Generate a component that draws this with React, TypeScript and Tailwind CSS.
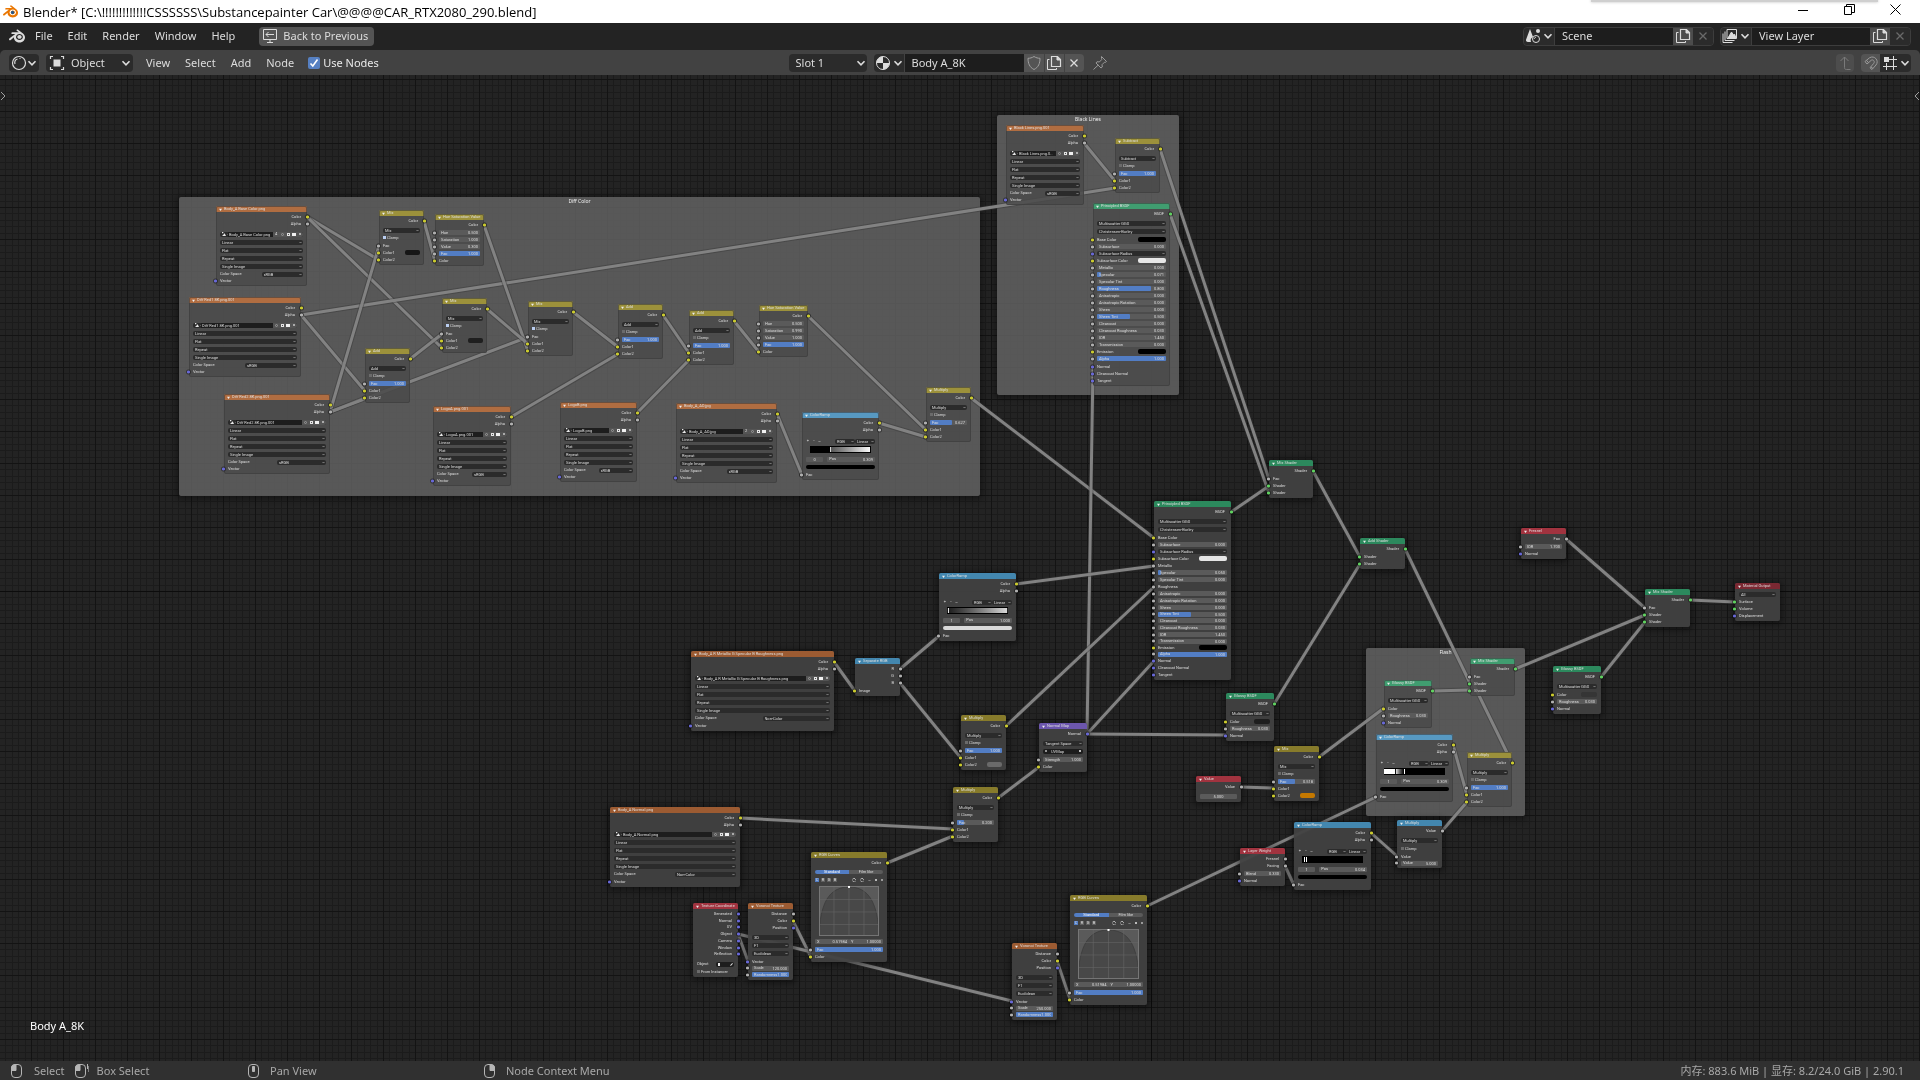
import React from "react";
import { SiBlender } from "react-icons/si";

type Sock = "y" | "g" | "b" | "s";
type Row = {
  k: string;
  t?: string;
  v?: string;
  c?: Sock;
  f?: number;
  short?: boolean;
  on?: boolean;
  sw?: string;
  stops?: number[];
  grad?: string;
  n?: number;
};
type NodeData = {
  x: number;
  y: number;
  w: number;
  title: string;
  kind: keyof typeof HEAD;
  rows: Row[];
  framed?: boolean;
};

const CANVAS_TOP = 75;

const SOCK: Record<Sock, string> = {
  y: "bg-[#cccc2c]",
  g: "bg-[#b0b0b0]",
  b: "bg-[#6868d8]",
  s: "bg-[#5fd35f]",
};

const HEAD = {
  tex: ["bg-[#9c5b32]", "bg-[#b06d41]"],
  color: ["bg-[#877b2b]", "bg-[#9c913b]"],
  conv: ["bg-[#4387af]", "bg-[#5799c2]"],
  shader: ["bg-[#2c895d]", "bg-[#409d70]"],
  input: ["bg-[#a1333f]", "bg-[#b34753]"],
  vector: ["bg-[#6c56ad]", "bg-[#6c56ad]"],
  output: ["bg-[#7b2832]", "bg-[#7b2832]"],
};

const GAP: Record<number, string> = { 1: "h-px", 2: "h-0.5", 3: "h-[3px]", 4: "h-1" };

/* ---------- row builders ---------- */
const gap = (n: number): Row => ({ k: "gap", n });
const out = (t: string, c: Sock, short = false): Row => ({ k: "out", t, c, short });
const inp = (t: string, c: Sock, short = false): Row => ({ k: "in", t, c, short });
const dd = (t: string): Row => ({ k: "dd", t });
const check = (on = false, t = "Clamp"): Row => ({ k: "check", t, on });
const num = (t: string, v: string, f = 0, c: Sock | undefined = "g", short = false): Row => ({ k: "num", t, v, f, c, short });
const col = (t: string, sw: string, c: Sock = "y"): Row => ({ k: "col", t, sw, c });

const image = (name: string, space: string, n?: number): Row[] => [
  out("Color", "y"),
  out("Alpha", "g"),
  gap(space === "sRGB" ? 3 : 2),
  { k: "img", t: name, n },
  dd("Linear"),
  dd("Flat"),
  dd("Repeat"),
  dd("Single Image"),
  { k: "space", t: "Color Space", v: space },
  inp("Vector", "b", space === "sRGB"),
];
const mix = (mode: string, on: boolean, fac: Row, c2: Row = inp("Color2", "y"), c1: Row = inp("Color1", "y")): Row[] => [
  out("Color", "y"), gap(2), dd(mode), check(on), gap(1), fac, c1, c2,
];
const hsv = (h: string, s: string, v: string): Row[] => [
  out("Color", "y"), gap(1), num("Hue", h), num("Saturation", s), num("Value", v), num("Fac", "1.000", 100), inp("Color", "y"),
];
const ramp = (grad: string, stops: number[], idx: string, pos: string, sw: string): Row[] => [
  out("Color", "y"),
  out("Alpha", "g"),
  gap(4),
  { k: "rampbar" },
  { k: "ramp", grad, stops },
  gap(2),
  { k: "ramppos", t: idx, v: pos },
  { k: "swatch", sw },
  inp("Fac", "g"),
];
const mixShader: Row[] = [out("Shader", "s"), gap(1), inp("Fac", "g"), inp("Shader", "s"), inp("Shader", "s")];
const glossy = (sw: string): Row[] => [
  out("BSDF", "s"), gap(2), dd("Multiscatter GGX"), gap(1), col("Color", sw), num("Roughness", "0.030"), inp("Normal", "b"),
];
const principled = (linked: boolean): Row[] => [
  out("BSDF", "s"),
  gap(2),
  dd("Multiscatter GGX"),
  dd("Christensen-Burley"),
  gap(1),
  linked ? inp("Base Color", "y") : col("Base Color", "bg-black"),
  num("Subsurface", "0.000"),
  { k: "dds", t: "Subsurface Radius", c: "b" },
  col("Subsurface Color", "bg-[#e6e6e6]"),
  linked ? inp("Metallic", "g") : num("Metallic", "0.000"),
  num("Specular", linked ? "0.050" : "0.071", linked ? 4 : 6),
  num("Specular Tint", "0.000"),
  linked ? inp("Roughness", "g") : num("Roughness", "0.800", 78),
  num("Anisotropic", "0.000"),
  num("Anisotropic Rotation", "0.000"),
  num("Sheen", "0.000"),
  num("Sheen Tint", "0.500", 48, "g", linked),
  num("Clearcoat", "0.000"),
  num("Clearcoat Roughness", "0.030"),
  num("IOR", "1.450"),
  num("Transmission", "0.000", 0, "g", linked),
  col("Emission", "bg-black"),
  num("Alpha", "1.000", 100, "g", linked),
  gap(1),
  inp("Normal", "b", linked),
  inp("Clearcoat Normal", "b"),
  inp("Tangent", "b"),
];
const voronoi = (scale: string): Row[] => [
  out("Distance", "g"), out("Color", "y"), out("Position", "b"), gap(2), dd("3D"), dd("F1"), dd("Euclidean"), gap(1),
  inp("Vector", "b"), num("Scale", scale, 0, "g", true), num("Randomness", "1.000", 100),
];
const curves: Row[] = [
  out("Color", "y"), gap(2), { k: "tabs" }, { k: "curvebar" }, gap(2), { k: "curve" }, gap(2), { k: "xy" }, gap(1),
  num("Fac", "1.000", 100), inp("Color", "y"),
];

/* ---------- graph ---------- */
const nodes: NodeData[] = [
  { x: 216, y: 206, w: 91, title: "Body_A Base Color.png", kind: "tex", framed: true, rows: image("Body_A Base Color.png", "sRGB", 4) },
  { x: 189, y: 297, w: 112, title: "Diff Red1 8K.png.001", kind: "tex", framed: true, rows: image("Diff Red1 8K.png.001", "sRGB") },
  { x: 224, y: 394, w: 106, title: "Diff Red2 8K.png.001", kind: "tex", framed: true, rows: image("Diff Red2 8K.png.001", "sRGB") },
  { x: 379, y: 210, w: 45, title: "Mix", kind: "color", framed: true, rows: mix("Mix", true, inp("Fac", "g"), inp("Color2", "y"), col("Color1", "bg-[#161616]")) },
  { x: 435, y: 214, w: 49, title: "Hue Saturation Value", kind: "color", framed: true, rows: hsv("0.500", "1.000", "0.300") },
  { x: 442, y: 298, w: 45, title: "Mix", kind: "color", framed: true, rows: mix("Mix", true, inp("Fac", "g"), inp("Color2", "y"), col("Color1", "bg-[#1f1f1f]")) },
  { x: 365, y: 348, w: 45, title: "Add", kind: "color", framed: true, rows: mix("Add", false, num("Fac", "1.000", 100)) },
  { x: 528, y: 301, w: 45, title: "Mix", kind: "color", framed: true, rows: mix("Mix", true, inp("Fac", "g")) },
  { x: 433, y: 406, w: 78, title: "LogoA.png.001", kind: "tex", framed: true, rows: image("LogoA.png.001", "sRGB") },
  { x: 560, y: 402, w: 77, title: "LogoB.png", kind: "tex", framed: true, rows: image("LogoB.png", "sRGB") },
  { x: 618, y: 304, w: 45, title: "Add", kind: "color", framed: true, rows: mix("Add", false, num("Fac", "1.000", 100)) },
  { x: 689, y: 310, w: 45, title: "Add", kind: "color", framed: true, rows: mix("Add", false, num("Fac", "1.000", 100)) },
  { x: 759, y: 305, w: 49, title: "Hue Saturation Value", kind: "color", framed: true, rows: hsv("0.500", "0.990", "1.000") },
  { x: 676, y: 403, w: 101, title: "Body_A_AO.jpg", kind: "tex", framed: true, rows: image("Body_A_AO.jpg", "sRGB", 2) },
  { x: 802, y: 412, w: 77, title: "ColorRamp", kind: "conv", framed: true, rows: ramp("bg-linear-to-r from-black from-33% via-[#555] via-34% to-white", [33, 99], "0", "0.309", "bg-black") },
  { x: 926, y: 387, w: 45, title: "Multiply", kind: "color", framed: true, rows: mix("Multiply", false, num("Fac", "0.627", 60)) },
  { x: 1006, y: 125, w: 78, title: "Black Lines.png.001", kind: "tex", framed: true, rows: image("Black Lines.png.0..", "sRGB") },
  { x: 1115, y: 138, w: 45, title: "Subtract", kind: "color", framed: true, rows: mix("Subtract", false, num("Fac", "1.000", 100)) },
  { x: 1093, y: 203, w: 77, title: "Principled BSDF", kind: "shader", framed: true, rows: principled(false) },
  { x: 1269, y: 460, w: 44, title: "Mix Shader", kind: "shader", rows: mixShader },
  { x: 1154, y: 501, w: 77, title: "Principled BSDF", kind: "shader", rows: principled(true) },
  { x: 1360, y: 538, w: 45, title: "Add Shader", kind: "shader", rows: [out("Shader", "s"), gap(1), inp("Shader", "s"), inp("Shader", "s")] },
  { x: 1226, y: 693, w: 48, title: "Glossy BSDF", kind: "shader", rows: glossy("bg-[#1e1e1e]") },
  { x: 939, y: 573, w: 77, title: "ColorRamp", kind: "conv", rows: ramp("bg-linear-to-r from-[#1a1a1a] to-[#dcdcdc]", [1, 99], "1", "1.000", "bg-[#d9d9d9]") },
  { x: 691, y: 651, w: 143, title: "Body_A R Metallic G Specular B Roughness.png", kind: "tex", rows: image("Body_A R Metallic G Specular B Roughness.png", "Non-Color") },
  { x: 855, y: 658, w: 45, title: "Separate RGB", kind: "conv", rows: [out("R", "g"), out("G", "g"), out("B", "g"), gap(1), inp("Image", "y")] },
  { x: 961, y: 715, w: 45, title: "Multiply", kind: "color", rows: mix("Multiply", false, num("Fac", "1.000", 100), col("Color2", "bg-[#6a6a6a]")) },
  { x: 1039, y: 723, w: 48, title: "Normal Map", kind: "vector", rows: [out("Normal", "b"), gap(2), dd("Tangent Space"), { k: "uv", t: "UVMap" }, gap(1), num("Strength", "1.000"), inp("Color", "y")] },
  { x: 953, y: 787, w: 45, title: "Multiply", kind: "color", rows: mix("Multiply", false, num("Fac", "0.200", 18)) },
  { x: 610, y: 807, w: 130, title: "Body_A Normal.png", kind: "tex", rows: image("Body_A Normal.png", "Non-Color") },
  { x: 693, y: 903, w: 45, title: "Texture Coordinate", kind: "input", rows: [out("Generated", "b"), out("Normal", "b"), out("UV", "b", true), out("Object", "b"), out("Camera", "b"), out("Window", "b"), out("Reflection", "b", true), gap(3), { k: "object", t: "Object" }, check(false, "From Instancer")] },
  { x: 748, y: 903, w: 45, title: "Voronoi Texture", kind: "tex", rows: voronoi("120.000") },
  { x: 811, y: 852, w: 76, title: "RGB Curves", kind: "color", rows: curves },
  { x: 1012, y: 943, w: 45, title: "Voronoi Texture", kind: "tex", rows: voronoi("250.000") },
  { x: 1070, y: 895, w: 77, title: "RGB Curves", kind: "color", rows: curves },
  { x: 1470, y: 658, w: 45, title: "Mix Shader", kind: "shader", framed: true, rows: mixShader },
  { x: 1384, y: 680, w: 48, title: "Glossy BSDF", kind: "shader", framed: true, rows: [out("BSDF", "s"), gap(2), dd("Multiscatter GGX"), gap(1), inp("Color", "y"), num("Roughness", "0.030"), inp("Normal", "b")] },
  { x: 1376, y: 734, w: 77, title: "ColorRamp", kind: "conv", framed: true, rows: ramp("bg-linear-to-r from-white from-18% to-black to-34%", [18, 32], "1", "0.309", "bg-black") },
  { x: 1467, y: 752, w: 45, title: "Multiply", kind: "color", framed: true, rows: mix("Multiply", false, num("Fac", "1.000", 100)) },
  { x: 1274, y: 746, w: 45, title: "Mix", kind: "color", rows: mix("Mix", false, num("Fac", "0.518", 47), col("Color2", "bg-[#c47800]")) },
  { x: 1196, y: 776, w: 45, title: "Value", kind: "input", rows: [out("Value", "g"), gap(2), { k: "value", v: "5.000" }] },
  { x: 1240, y: 848, w: 45, title: "Layer Weight", kind: "input", rows: [out("Fresnel", "g"), out("Facing", "g"), gap(1), num("Blend", "0.330"), inp("Normal", "b")] },
  { x: 1294, y: 822, w: 77, title: "ColorRamp", kind: "conv", rows: ramp("bg-black", [3, 6], "1", "0.034", "bg-black") },
  { x: 1397, y: 820, w: 45, title: "Multiply", kind: "conv", rows: [out("Value", "g"), gap(2), dd("Multiply"), gap(1), check(), gap(1), inp("Value", "g"), num("Value", "5.000", 0, "g", true)] },
  { x: 1553, y: 666, w: 48, title: "Glossy BSDF", kind: "shader", rows: glossy("bg-[#353535]") },
  { x: 1521, y: 528, w: 45, title: "Fresnel", kind: "input", rows: [out("Fac", "g"), gap(1), num("IOR", "1.700"), inp("Normal", "b")] },
  { x: 1645, y: 589, w: 45, title: "Mix Shader", kind: "shader", rows: mixShader },
  { x: 1735, y: 583, w: 45, title: "Material Output", kind: "output", rows: [dd("All"), inp("Surface", "s"), inp("Volume", "s"), inp("Displacement", "b")] },
];

const frames = [
  { x: 179, y: 197, w: 801, h: 299, label: "Diff Color" },
  { x: 997, y: 115, w: 182, h: 280, label: "Black Lines" },
  { x: 1366, y: 648, w: 159, h: 168, label: "Flash" },
];

const links: [number, number, number, number][] = [
  [307, 217, 379, 260], [307, 217, 442, 348], [301, 315, 1115, 188], [301, 315, 365, 391],
  [330, 412, 379, 246], [330, 412, 365, 398], [330, 412, 528, 337], [410, 359, 442, 334],
  [424, 221, 435, 261], [484, 225, 528, 351], [487, 309, 528, 344], [573, 312, 618, 347],
  [511, 417, 618, 354], [663, 315, 689, 353], [637, 413, 689, 360], [734, 321, 759, 352],
  [808, 316, 926, 430], [777, 414, 802, 475], [879, 423, 926, 437], [971, 398, 1154, 538],
  [1084, 143, 1115, 181], [1160, 149, 1269, 479], [1170, 214, 1269, 493], [1231, 512, 1269, 486],
  [1087, 734, 1093, 367], [1087, 734, 1154, 661], [1087, 734, 1226, 735], [1016, 584, 1154, 566],
  [834, 662, 855, 691], [900, 669, 939, 636], [900, 683, 961, 758], [1006, 726, 1154, 587],
  [998, 798, 1039, 767], [740, 818, 953, 829], [887, 863, 953, 836], [793, 921, 811, 957],
  [738, 934, 748, 961], [738, 934, 1012, 1001], [1057, 961, 1070, 999], [1147, 906, 1376, 797],
  [1313, 471, 1360, 557], [1274, 704, 1360, 564], [1405, 549, 1470, 683], [1512, 763, 1470, 677],
  [1432, 691, 1470, 690], [1319, 757, 1384, 708], [1241, 787, 1274, 788], [1285, 866, 1294, 885],
  [1371, 833, 1397, 856], [1442, 831, 1467, 802], [1453, 745, 1467, 795], [1566, 539, 1645, 608],
  [1515, 669, 1645, 615], [1601, 677, 1645, 622], [1690, 600, 1735, 602],
];

/* ---------- node pieces ---------- */
function Socket({ c, right }: { c: Sock; right?: boolean }) {
  return (
    <i
      className={`absolute top-1/2 size-[3px] -translate-y-1/2 rounded-[1px] outline outline-black/40 ${SOCK[c]} ${right ? "-right-[2px]" : "-left-[2px]"}`}
    />
  );
}

function Chevron({ className = "" }: { className?: string }) {
  return (
    <svg viewBox="0 0 10 10" className={className} fill="none" stroke="currentColor" strokeWidth="1.6" aria-hidden="true">
      <path d="M1.5 3.2 5 6.8 8.5 3.2" />
    </svg>
  );
}

function MiniSelect({ text, className = "" }: { text: string; className?: string }) {
  return (
    <span className={`relative flex ${className}`}>
      <select aria-label={text} className="h-[5px] w-full appearance-none rounded-[2px] bg-[#2b2b2b] px-0.5 leading-[5px] outline-none">
        <option>{text}</option>
      </select>
      <Chevron className="pointer-events-none absolute top-px right-px size-[3px]" />
    </span>
  );
}

function MiniNum({ t, v, f = 0 }: { t?: string; v: string; f?: number }) {
  return (
    <label className="relative flex h-[5px] w-full min-w-0 items-center rounded-[1px] bg-[#5a5a5a] px-0.5">
      {f > 0 && <i className="absolute inset-y-0 left-0 rounded-[1px] bg-[#527dc4]" style={{ width: `${f}%` }} />}
      {t && <span className="relative whitespace-nowrap">{t}</span>}
      <input aria-label={t ?? "Value"} defaultValue={v} className={`relative h-[5px] w-0 min-w-0 flex-1 bg-transparent outline-none ${t ? "text-right" : "text-center"}`} />
    </label>
  );
}

function NodeRow({ r }: { r: Row }) {
  const h = r.short ? "h-1.5" : "h-[7px]";
  const base = "relative flex shrink-0 items-center px-1";
  switch (r.k) {
    case "gap":
      return <div className={GAP[r.n!]} />;
    case "out":
      return (
        <div className={`${base} ${h} justify-end pr-1.5`}>
          {r.t}
          <Socket c={r.c!} right />
        </div>
      );
    case "in":
      return (
        <div className={`${base} ${h}`}>
          <Socket c={r.c!} />
          <span className="whitespace-nowrap">{r.t}</span>
        </div>
      );
    case "dd":
      return (
        <div className={`${base} h-2`}>
          <MiniSelect text={r.t!} className="w-full" />
        </div>
      );
    case "dds":
      return (
        <div className={`${base} ${h}`}>
          <Socket c={r.c!} />
          <MiniSelect text={r.t!} className="w-full" />
        </div>
      );
    case "check":
      return (
        <label className={`${base} ${h} gap-px whitespace-nowrap`}>
          <input type="checkbox" defaultChecked={r.on} className="size-[3px] appearance-none bg-[#6b6b6b] checked:bg-[#b9cdf0]" />
          {r.t}
        </label>
      );
    case "num":
      return (
        <div className={`${base} ${h}`}>
          {r.c && <Socket c={r.c} />}
          <MiniNum t={r.t} v={r.v!} f={r.f} />
        </div>
      );
    case "value":
      return (
        <div className={`${base} h-2`}>
          <MiniNum v={r.v!} />
        </div>
      );
    case "col":
      return (
        <div className={`${base} ${h} justify-between whitespace-nowrap`}>
          <Socket c={r.c!} />
          {r.t}
          <button aria-label={`${r.t} swatch`} className={`h-[5px] w-2/5 rounded-[2px] ${r.sw}`} />
        </div>
      );
    case "img":
      return (
        <div className={`${base} h-2`}>
          <div className="flex h-[5px] w-full items-center rounded-[2px] bg-[#2b2b2b]">
            <button aria-label="Browse image" className="flex w-2 items-center gap-px pl-0.5">
              <svg viewBox="0 0 6 6" className="size-[4px] shrink-0" aria-hidden="true">
                <path d="M0 0h2v2H0zM2 4l2-2 2 4H0z" fill="#e8e8e8" />
              </svg>
              <Chevron className="size-[3px] shrink-0" />
            </button>
            <input aria-label="Image name" defaultValue={r.t} className="h-[5px] w-0 min-w-0 flex-1 bg-[#1d1d1d] pl-px outline-none" />
            {r.n && <button className="h-[5px] w-[6px] bg-[#545454]">{r.n}</button>}
            <button aria-label="Fake user" className="flex h-[5px] w-1.5 items-center justify-center bg-[#545454]">
              <i className="size-[3px] rounded-full border border-[#999]" />
            </button>
            <button aria-label="New image" className="flex h-[5px] w-1.5 items-center justify-center bg-[#545454]">
              <i className="size-[3px] border border-[#e4e4e4]" />
            </button>
            <button aria-label="Open image" className="flex h-[5px] w-1.5 items-center justify-center bg-[#545454]">
              <i className="h-[3px] w-1 bg-[#f0f0f0]" />
            </button>
            <button aria-label="Unlink image" className="flex h-[5px] w-1.5 items-center justify-center rounded-r-[2px] bg-[#545454]">
              <i className="size-0.5 bg-[#aaa]" />
            </button>
          </div>
        </div>
      );
    case "space":
      return (
        <div className={`${base} h-2 justify-between whitespace-nowrap`}>
          {r.t}
          <MiniSelect text={r.v!} className="w-1/2" />
        </div>
      );
    case "uv":
      return (
        <div className={`${base} h-2`}>
          <div className="flex h-[5px] w-full items-center gap-1 rounded-[2px] bg-[#1d1d1d] px-0.5">
            <i className="size-0.5 rounded-full bg-[#bbb]" />
            <input aria-label="UV map" defaultValue={r.t} className="h-[5px] w-0 min-w-0 flex-1 bg-transparent outline-none" />
            <i className="size-0.5 bg-[#bbb]" />
          </div>
        </div>
      );
    case "object":
      return (
        <div className={`${base} h-2 justify-between`}>
          {r.t}
          <button aria-label="Pick object" className="flex h-[5px] w-1/2 items-center justify-between rounded-[2px] bg-[#1d1d1d] px-0.5">
            <i className="h-[3px] w-0.5 bg-[#e8e8e8]" />
            <i className="h-[3px] w-px rotate-45 bg-[#ddd]" />
          </button>
        </div>
      );
    case "rampbar":
      return (
        <div className={`${base} h-2 gap-0.5`}>
          <button className="w-1 text-center">+</button>
          <button className="w-1 text-center">−</button>
          <button aria-label="Ramp tools" className="w-1">
            <Chevron className="size-[3px]" />
          </button>
          <span className="flex flex-1 justify-end">
            <MiniSelect text="RGB" className="w-5" />
            <MiniSelect text="Linear" className="w-5" />
          </span>
        </div>
      );
    case "ramp":
      return (
        <div className="flex h-2 shrink-0 items-center px-2">
          <div className={`relative h-[7px] w-full border-y border-black ${r.grad}`}>
            {r.stops!.map((s) => (
              <i key={s} className="absolute inset-y-0 w-px border-l border-dashed border-white mix-blend-difference" style={{ left: `${s}%` }} />
            ))}
          </div>
        </div>
      );
    case "ramppos":
      return (
        <div className={`${base} h-2 gap-1`}>
          <span className="flex w-1/4">
            <MiniNum v={r.t!} />
          </span>
          <span className="flex flex-1">
            <MiniNum t="Pos" v={r.v!} />
          </span>
        </div>
      );
    case "swatch":
      return (
        <div className={`${base} h-2`}>
          <button aria-label="Stop color" className={`h-1 w-full rounded-[2px] ${r.sw}`} />
        </div>
      );
    case "tabs":
      return (
        <div className={`${base} h-2`}>
          <button className="h-1 flex-1 rounded-l-[2px] bg-[#527dc4] leading-[4px] text-white">Standard</button>
          <button className="h-1 flex-1 rounded-r-[2px] bg-[#5a5a5a] leading-[4px]">Film like</button>
        </div>
      );
    case "curvebar":
      return (
        <div className={`${base} h-2 gap-0.5`}>
          {["C", "R", "G", "B"].map((c, i) => (
            <button key={c} className={`h-1 w-1 text-center leading-[4px] ${i === 0 ? "bg-[#527dc4]" : "bg-[#5f5f5f]"}`}>
              {c}
            </button>
          ))}
          <span className="flex flex-1 items-center justify-end gap-1">
            <i className="size-1 rounded-full border border-dotted border-[#ddd]" />
            <i className="size-1 rounded-full border border-dotted border-[#ddd]" />
            <Chevron className="size-[3px]" />
            <i className="size-0.5 bg-[#bbb]" />
            <i className="size-0.5 bg-[#999]" />
          </span>
        </div>
      );
    case "curve":
      return (
        <div className="flex h-[50px] shrink-0 px-2">
          <svg viewBox="0 0 60 52" preserveAspectRatio="none" className="size-full" aria-hidden="true">
            <rect width="60" height="52" fill="#5a5a5a" />
            <path d="M0 52C1 18 10 1 30 1S59 18 60 52z" fill="#484848" stroke="#383838" strokeWidth=".7" />
            <path d="M15 0v52M30 0v52M45 0v52M0 14h60M0 27h60M0 40h60" stroke="#666" strokeWidth=".6" />
            <rect x=".5" y=".5" width="59" height="51" fill="none" stroke="#777" />
            <rect x="29" width="2" height="2" fill="#fff" />
          </svg>
        </div>
      );
    case "xy":
      return (
        <div className={`${base} ${h}`}>
          <MiniNum t="X" v="0.51984" />
          <MiniNum t="Y" v="1.00000" />
        </div>
      );
    default:
      return null;
  }
}

function GraphNode({ n }: { n: NodeData }) {
  return (
    <section
      aria-label={n.title}
      className={`absolute flex flex-col rounded-[2px] pb-0.5 font-['Liberation_Sans_Narrow','Roboto',sans-serif] text-[4px] leading-none text-[#dedede] ${n.framed ? "bg-[#4a4a4a]/85 outline -outline-offset-1 outline-[#3c3c3c]/60" : "bg-[#414141]/95 shadow-[0_1px_6px_2px_rgba(0,0,0,0.45)]"}`}
      style={{ left: n.x, top: n.y - CANVAS_TOP, width: n.w }}
    >
      <header className={`mb-px flex h-1.5 shrink-0 items-center gap-0.5 rounded-t-[2px] px-[3px] whitespace-nowrap ${HEAD[n.kind][n.framed ? 1 : 0]}`}>
        <svg viewBox="0 0 4 4" className="size-[3px] shrink-0" aria-hidden="true">
          <path d="M0 1h4L2 4z" fill="#eee" />
        </svg>
        {n.title}
      </header>
      {n.rows.map((r, i) => (
        <NodeRow key={i} r={r} />
      ))}
    </section>
  );
}

/* ---------- icons ---------- */
type IconProps = { className?: string };
const svgBase = { viewBox: "0 0 16 16", fill: "none", stroke: "currentColor", strokeWidth: 1, "aria-hidden": true } as const;

const CopyIcon = ({ className = "size-4" }: IconProps) => (
  <svg {...svgBase} className={className}>
    <path d="M5.5 1.5h6l3 3v7h-9z" strokeWidth="1.2" />
    <path d="M11 1.5v3.500h3.500z" fill="currentColor" />
    <path d="M3.500 4.500h-2v10h9v-1.500" />
  </svg>
);
const CloseIcon = ({ className = "size-4" }: IconProps) => (
  <svg {...svgBase} className={className}>
    <path d="m4.500 4.500 7 7m0-7-7 7" strokeWidth="1.300" />
  </svg>
);
const ShieldIcon = () => (
  <svg {...svgBase} className="size-4">
    <path d="M8 1.500c2 1.300 4 1.800 6 1.800 0 5-1.500 9-6 11.200C3.500 12.300 2 8.300 2 3.300c2 0 4-.5 6-1.800z" />
  </svg>
);
const PinIcon = () => (
  <svg {...svgBase} className="size-4 text-[#9a9a9a]">
    <path d="m9.500 1.500 5 5-1.300.9-.7-.2-2.500 2.500.3 2.300-1.300 1L4 8l1-1.300 2.300.3 2.500-2.500-.3-.9zM6.300 10 1.500 14.500" />
  </svg>
);
const SceneIcon = () => (
  <svg {...svgBase} className="size-4">
    <path d="M5 1 8 9a4 4 0 0 0-2 5H3c-1.500 0-2.300-1-2-2.200z" fill="currentColor" stroke="none" />
    <circle cx="11" cy="11" r="3.500" />
    <circle cx="13" cy="3" r="2" fill="currentColor" stroke="none" />
    <path d="M9.300 11c0-1 .7-1.700 1.700-1.700" />
  </svg>
);
const LayersIcon = () => (
  <svg {...svgBase} className="size-4">
    <path d="M5 1.500h9.500v9H5z" />
    <path d="M3 3.500v9h9.500M1 5.500v9h9.500" />
    <path d="M6 10 9.500 4l2 3 1-1 1.500 4z" fill="currentColor" />
  </svg>
);
const MaterialIcon = () => (
  <svg {...svgBase} className="size-4">
    <circle cx="8" cy="8" r="6.500" />
    <path d="M8 1.500A6.500 6.500 0 0 0 1.500 8H8zM8 8v6.500A6.500 6.500 0 0 0 14.500 8z" fill="currentColor" stroke="none" />
  </svg>
);
const EditorIcon = () => (
  <svg {...svgBase} className="size-4" strokeWidth={1.2}>
    <circle cx="8" cy="8" r="6.500" />
    <path d="M4 9c-.8-2.500.3-4.500 2.500-5M8.500 3.500h1" />
  </svg>
);
const ObjectIcon = () => (
  <svg {...svgBase} className="size-4 shrink-0">
    <path d="M1.500 4V1.500H4M12 1.500h2.500V4M14.500 12v2.500H12M4 14.500H1.500V12" strokeWidth="1.200" />
    <path d="M4.500 4.500h7v7h-7z" fill="currentColor" stroke="none" />
  </svg>
);
const BackIcon = () => (
  <svg {...svgBase} className="size-4">
    <path d="M1.500 1.500h13v10h-13zM8 11.500v3M5 14.500h6M4 6.500h8M6.500 4 4 6.500 6.500 9" />
  </svg>
);
const MagnetIcon = () => (
  <svg {...svgBase} className="size-4">
    <path d="M2 6.500 6.500 2.800c5-3 10 3 6.500 7.200L9 14.500 7 12.800l3.800-4.500c1.400-2-.8-4.300-2.600-3L4 9z M3.500 5.300l2 2.400M7.800 11.800 10 13.500" />
  </svg>
);
const ParentIcon = () => (
  <svg {...svgBase} className="size-4">
    <path d="M13.500 14.500h-4c-1.500 0-2-.7-2-2V2M3.500 6l4-4 4 4" />
  </svg>
);
const SnapIcon = () => (
  <svg {...svgBase} className="size-4">
    <path d="M11.500 1v14M4.500 8v7M7 4.500h8M1 11.500h14" />
    <path d="M2 2h5v5H2z" fill="currentColor" stroke="none" />
  </svg>
);
const MouseIcon = ({ part, drag }: { part: "l" | "m" | "r"; drag?: boolean }) => (
  <svg viewBox="0 0 16 16" className="size-4 text-[#b5b5b5]" fill="none" stroke="currentColor" aria-hidden="true">
    <rect x="2.500" y="1.500" width="10" height="13" rx="3.500" />
    {part === "l" && <path d="M7 1.500v6H2.500V4Q3 1.500 7 1.500z" fill="currentColor" />}
    {part === "r" && <path d="M8 1.500v6h4.500V4Q12 1.500 8 1.500z" fill="currentColor" />}
    {part === "m" && <path d="M6.500 3.500h2v5h-2z" fill="currentColor" />}
    {drag && <path d="M14.500 1v5M15.900 3v6" />}
  </svg>
);

function Browse({ children, label }: { children: React.ReactNode; label: string }) {
  return (
    <button aria-label={label} className="flex h-full w-[30px] shrink-0 items-center justify-center gap-0.5 rounded-l-[4px] bg-[#2b2b2b]">
      {children}
      <Chevron className="size-2.5" />
    </button>
  );
}

function DataBlock({ icon, name, label }: { icon: React.ReactNode; name: string; label: string }) {
  return (
    <div className="flex h-[19px] w-[191px] overflow-hidden rounded-[4px] border border-[#3d3d3d] bg-[#282828]">
      <Browse label={`Browse ${label}`}>{icon}</Browse>
      <input aria-label={label} defaultValue={name} className="w-0 min-w-0 flex-1 border-l border-[#3d3d3d] bg-[#1d1d1d] pl-[7px] outline-none" />
      <button aria-label={`New ${label}`} className="flex w-5 items-center justify-center bg-[#4c4c4c]">
        <CopyIcon />
      </button>
      <button aria-label={`Remove ${label}`} className="flex w-5 items-center justify-center bg-[#2b2b2b] text-[#6a6a6a]">
        <CloseIcon />
      </button>
    </div>
  );
}

export default function App() {
  return (
    <div className="flex h-screen flex-col overflow-hidden bg-[#232323] font-['Noto_Sans','Noto_Sans_CJK_SC',sans-serif] text-[11px] leading-4 text-[#dcdcdc]">
      {/* window title */}
      <header className="relative flex h-[23px] shrink-0 items-center bg-white pl-[3px] text-black">
        <div className="absolute top-0 right-[42px] h-0.5 w-[287px] bg-[#cfcfcf] shadow-[0_0_3px_rgba(0,0,0,0.3)]" />
        <svg viewBox="0 0 24 24" className="size-[15px] shrink-0" aria-hidden="true">
          <circle cx="15" cy="14" r="6" fill="#fff" />
          <SiBlender size={24} color="#ea7600" />
          <circle cx="15.300" cy="13.500" r="2.700" fill="#265787" />
        </svg>
        <h1 className="ml-[5px] flex-1 font-['Open_Sans',sans-serif] text-[13px] whitespace-nowrap">
          {"Blender* [C:\\!!!!!!!!!!!!!CSSSSSS\\Substancepainter Car\\@@@@CAR_RTX2080_290.blend]"}
        </h1>
        <div className="flex gap-[35px] pr-[19px] pb-1">
          <button aria-label="Minimize" className="size-[11px]">
            <svg viewBox="0 0 11 11" className="size-full"><path d="M0 6.500h10" stroke="#000" /></svg>
          </button>
          <button aria-label="Restore" className="size-[11px]">
            <svg viewBox="0 0 11 11" className="size-full" fill="none" stroke="#000"><path d="M.5 2.500h7v8h-7zM2.500 2.500v-2h8v8h-3" /></svg>
          </button>
          <button aria-label="Close" className="size-[11px]">
            <svg viewBox="0 0 11 11" className="size-full" fill="none" stroke="#000"><path d="m.5.5 10 10m0-10-10 10" /></svg>
          </button>
        </div>
      </header>

      {/* main menu */}
      <nav className="flex h-[27px] shrink-0 items-center pr-[9px] pb-px pl-[9px]">
        <SiBlender className="size-4" />
        <div className="ml-2.5 flex gap-[15px]">
          {["File", "Edit", "Render", "Window", "Help"].map((m) => (
            <button key={m}>{m}</button>
          ))}
        </div>
        <button className="ml-6 flex h-[19px] items-center gap-[5px] rounded-[4px] bg-[#545454] pr-1.5 pl-[3px]">
          <BackIcon />
          Back to Previous
        </button>
        <div className="ml-auto flex gap-1.5">
          <DataBlock icon={<SceneIcon />} name="Scene" label="Scene" />
          <DataBlock icon={<LayersIcon />} name="View Layer" label="View Layer" />
        </div>
      </nav>

      {/* node editor header */}
      <div className="grid h-[25px] shrink-0 grid-cols-[1fr_auto_1fr] items-center rounded-t-[5px] bg-[#424242] px-[9px]">
        <div className="flex items-center">
          <button aria-label="Editor type" className="flex h-[18px] items-center rounded-[4px] bg-[#2b2b2b] px-0.5">
            <EditorIcon />
            <Chevron className="size-2.5" />
          </button>
          <div className="relative ml-[7px] flex h-[18px] w-[87px] items-center rounded-[4px] bg-[#2b2b2b] pl-[3px]">
            <ObjectIcon />
            <select aria-label="Shader type" className="w-full appearance-none pl-1.5 outline-none">
              <option>Object</option>
            </select>
            <Chevron className="pointer-events-none absolute right-0.5 size-2.5" />
          </div>
          <div className="ml-[13px] flex gap-[15px]">
            {["View", "Select", "Add", "Node"].map((m) => (
              <button key={m}>{m}</button>
            ))}
          </div>
          <label className="ml-[14px] flex items-center gap-[3px] text-[#eaeaea]">
            <span className="relative flex">
              <input type="checkbox" defaultChecked className="peer size-[12px] appearance-none rounded-[2px] bg-[#545454] checked:bg-[#5680c2]" />
              <svg viewBox="0 0 12 12" className="pointer-events-none absolute inset-0 hidden size-3 peer-checked:block" fill="none" stroke="#fff" strokeWidth="1.600">
                <path d="m2.500 6.500 2.300 2.500L9.500 2.500" />
              </svg>
            </span>
            Use Nodes
          </label>
        </div>

        <div className="flex items-center pr-6">
          <div className="relative flex h-[18px] w-[78px] items-center rounded-[4px] bg-[#2b2b2b]">
            <select aria-label="Material slot" className="w-full appearance-none pl-[7px] outline-none">
              <option>Slot 1</option>
            </select>
            <Chevron className="pointer-events-none absolute right-px size-2.5" />
          </div>
          <div className="ml-[7px] flex h-[18px] w-[210px]">
            <Browse label="Browse material">
              <MaterialIcon />
            </Browse>
            <input aria-label="Material name" defaultValue="Body A_8K" className="w-0 min-w-0 flex-1 border-l border-[#424242] bg-[#1d1d1d] pl-[7px] outline-none" />
            <button aria-label="Fake user" className="flex w-5 items-center justify-center bg-[#545454] text-[#a0a0a0]">
              <ShieldIcon />
            </button>
            <button aria-label="New material" className="flex w-5 items-center justify-center border-l border-[#424242] bg-[#545454]">
              <CopyIcon />
            </button>
            <button aria-label="Unlink material" className="flex w-5 items-center justify-center rounded-r-[4px] border-l border-[#424242] bg-[#545454]">
              <CloseIcon />
            </button>
          </div>
          <button aria-label="Pin" className="ml-2">
            <PinIcon />
          </button>
        </div>

        <div className="flex h-[18px] items-center justify-end">
          <button aria-label="Parent node tree" className="flex h-full w-[18px] items-center justify-center rounded-[4px] bg-[#4d4d4d] text-[#7a7a7a]">
            <ParentIcon />
          </button>
          <button aria-label="Snap" className="ml-[7px] flex h-full w-[19px] items-center justify-center rounded-l-[4px] bg-[#545454] text-[#9a9a9a]">
            <MagnetIcon />
          </button>
          <button aria-label="Snap element" className="flex h-full w-[31px] items-center justify-center gap-0.5 rounded-r-[4px] bg-[#2b2b2b]">
            <SnapIcon />
            <Chevron className="size-2.5" />
          </button>
        </div>
      </div>

      {/* node canvas */}
      <main className="relative flex-1 overflow-hidden">
        <svg className="absolute inset-0 size-full" aria-hidden="true">
          <defs>
            <pattern id="grid" width="32" height="32" x="-1" y="4" patternUnits="userSpaceOnUse">
              <path d="M6.500 0v32M13.500 0v32M19.500 0v32M26.500 0v32M0 6.500h32M0 13.500h32M0 19.500h32M0 26.500h32" stroke="#1b1b1b" />
              <path d="M.5 0v32M0 .5h32" stroke="#131313" />
            </pattern>
          </defs>
          <rect width="100%" height="100%" fill="url(#grid)" />
          <path d="M1151.500 0v2000M0 516.500h4000" stroke="#0c0c0c" />
        </svg>

        {frames.map((f) => (
          <div
            key={f.label}
            className="absolute rounded-[2px] bg-[#626262]/85 pt-px text-center text-[5px] leading-[7px] text-[#eee] shadow-[0_1px_6px_2px_rgba(0,0,0,0.4)]"
            style={{ left: f.x, top: f.y - CANVAS_TOP, width: f.w, height: f.h }}
          >
            {f.label}
          </div>
        ))}

        <svg className="absolute inset-0 size-full" aria-hidden="true">
          {links.map(([x1, y1, x2, y2], i) => (
            <g key={i} strokeLinecap="round">
              <line x1={x1} y1={y1 - CANVAS_TOP} x2={x2} y2={y2 - CANVAS_TOP} stroke="#333" strokeOpacity=".4" strokeWidth="5" />
              <line x1={x1} y1={y1 - CANVAS_TOP} x2={x2} y2={y2 - CANVAS_TOP} stroke="#828282" strokeWidth="3" />
            </g>
          ))}
        </svg>

        {nodes.map((n, i) => (
          <GraphNode key={i} n={n} />
        ))}

        <button aria-label="Show tools" className="absolute top-[15px] left-0 flex h-3 w-1.5 items-center text-[#a0a0a0]">
          <svg viewBox="0 0 6 10" className="h-2.5 w-1.5" fill="none" stroke="currentColor"><path d="m1 1 4 4-4 4" /></svg>
        </button>
        <button aria-label="Show sidebar" className="absolute top-[15px] right-0 flex h-3 w-1.5 items-center text-[#a0a0a0]">
          <svg viewBox="0 0 6 10" className="h-2.5 w-1.5" fill="none" stroke="currentColor"><path d="M5 1 1 5l4 4" /></svg>
        </button>
        <p className="absolute bottom-[27px] left-[30px] text-white">Body A_8K</p>
      </main>

      {/* status bar */}
      <footer className="flex h-[19px] shrink-0 items-center bg-[#303030] pr-4 pl-[9px] text-[#a8a8a8]">
        <div className="flex w-[237px] items-center">
          <MouseIcon part="l" />
          <span className="ml-[9px]">Select</span>
          <span className="ml-2 flex items-center gap-2">
            <MouseIcon part="l" drag />
            Box Select
          </span>
        </div>
        <div className="flex w-[236px] items-center gap-2">
          <MouseIcon part="m" />
          Pan View
        </div>
        <div className="flex items-center gap-2">
          <MouseIcon part="r" />
          Node Context Menu
        </div>
        <span className="ml-auto">内存: 883.6 MiB | 显存: 8.2/24.0 GiB | 2.90.1</span>
      </footer>
    </div>
  );
}
